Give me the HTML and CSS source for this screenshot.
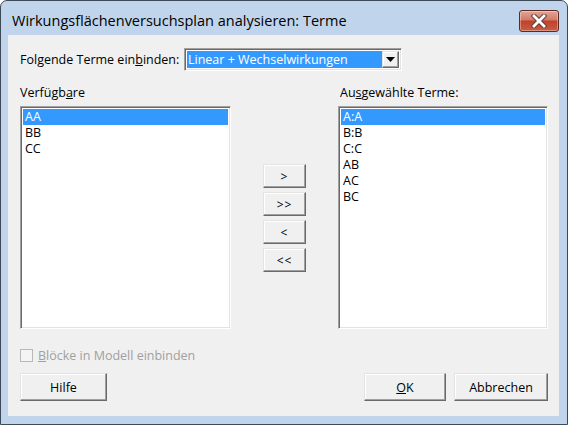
FILE: index.html
```html
<!DOCTYPE html>
<html lang="de">
<head>
<meta charset="utf-8">
<title>Wirkungsflächenversuchsplan analysieren: Terme</title>
<link rel="stylesheet" href="styles.css">
</head>
<body>
<div class="window">
  <div class="titlebar">
    <span class="title">Wirkungsflächenversuchsplan analysieren: Terme</span>
    <span class="close">
      <svg width="16" height="14" viewBox="0 0 16 14">
        <path d="M3 2 L13 12 M13 2 L3 12" stroke="#5a3a36" stroke-width="4.6" stroke-linecap="square"/>
        <path d="M3 2 L13 12 M13 2 L3 12" stroke="#ffffff" stroke-width="2.8" stroke-linecap="square"/>
      </svg>
    </span>
  </div>
  <div class="client">
    <div class="combo-row">
      <span class="label">Folgende Terme ein<u>b</u>inden:</span>
      <div class="combo">
        <span class="combo-value">Linear + Wechselwirkungen</span>
        <span class="combo-btn">
          <svg width="9" height="5" viewBox="0 0 9 5"><path d="M0 0 H9 L4.5 5 Z" fill="#000"/></svg>
        </span>
      </div>
    </div>
    <div class="lists">
      <div class="col">
        <div class="label list-label">Verfügb<u>a</u>re</div>
        <div class="listbox">
          <div class="item sel">AA</div>
          <div class="item">BB</div>
          <div class="item">CC</div>
        </div>
      </div>
      <div class="movers">
        <span class="btn mover">&gt;</span>
        <span class="btn mover">&gt;&gt;</span>
        <span class="btn mover">&lt;</span>
        <span class="btn mover">&lt;&lt;</span>
      </div>
      <div class="col">
        <div class="label list-label right-label">Au<u>s</u>gewählte Terme:</div>
        <div class="listbox">
          <div class="item sel">A:A</div>
          <div class="item">B:B</div>
          <div class="item">C:C</div>
          <div class="item">AB</div>
          <div class="item">AC</div>
          <div class="item">BC</div>
        </div>
      </div>
    </div>
    <div class="check-row">
      <span class="checkbox"></span>
      <span class="label disabled"><u>B</u>löcke in Modell einbinden</span>
    </div>
    <div class="footer">
      <span class="btn wide help">Hilfe</span>
      <div class="footer-right">
        <span class="btn wide ok"><u>O</u>K</span>
        <span class="btn wide cancel">Abbrechen</span>
      </div>
    </div>
  </div>
</div>
</body>
</html>
```

FILE: styles.css
```css
* { box-sizing: border-box; }
html, body { margin: 0; padding: 0; }
body {
  width: 568px;
  height: 425px;
  overflow: hidden;
  background: #ffffff;
}
.window {
  width: 568px;
  height: 425px;
  background: #c0d5ec;
  border: 1px solid #3d4a58;
  border-radius: 7px 7px 0 0;
  display: flex;
  flex-direction: column;
  padding: 0 8px 8px 7px;
}
.titlebar {
  height: 34px;
  display: flex;
  align-items: flex-start;
  justify-content: space-between;
  flex-shrink: 0;
}
.title {
  font-family: "Open Sans", "Noto Sans", sans-serif;
  font-size: 14.5px;
  color: #000;
  margin: 11px 0 0 4px;
  line-height: 18px;
}
.close {
  width: 40px;
  height: 22px;
  margin-top: 9px;
  margin-right: 0;
  border: 1px solid #5b2a24;
  border-radius: 3px;
  background: linear-gradient(#e2a597 0%, #d27a68 45%, #c0402b 50%, #c95d44 100%);
  box-shadow: inset 0 0 0 1px rgba(255,255,255,0.35);
  display: flex;
  align-items: center;
  justify-content: center;
}
.client {
  flex: 1;
  background: #f0f0f0;
  padding: 13px 10px 0 12px;
  font-family: "Open Sans", "Noto Sans", sans-serif;
  font-size: 12.5px;
  color: #000;
  display: flex;
  flex-direction: column;
}
.label { line-height: 15px; white-space: nowrap; }
.combo-row {
  display: flex;
  align-items: center;
  height: 23px;
}
.combo-row .label { width: 164px; }
.combo {
  width: 218px;
  height: 23px;
  display: flex;
  background: #fff;
  border: 1px solid;
  border-color: #a0a0a0 #ffffff #ffffff #a0a0a0;
  box-shadow: inset 1px 1px 0 #696969, inset -1px -1px 0 #e3e3e3;
  padding: 2px;
}
.combo-value {
  flex: 1;
  background: #3399ff;
  color: #fff;
  line-height: 17px;
  padding-left: 1px;
}
.combo-btn {
  width: 17px;
  background: #f0f0f0;
  border: 1px solid;
  border-color: #e3e3e3 #696969 #696969 #e3e3e3;
  box-shadow: inset -1px -1px 0 #a0a0a0, inset 1px 1px 0 #fff;
  display: flex;
  align-items: center;
  justify-content: center;
}
.lists {
  display: grid;
  grid-template-columns: 211px 43px 210px;
  column-gap: 0;
  justify-content: space-between;
  width: 528px;
  margin-top: 14px;
}
.list-label { height: 21px; padding-top: 0; }
.right-label { padding-left: 2px; }
.listbox {
  height: 223px;
  background: #fff;
  border: 1px solid;
  border-color: #a0a0a0 #ffffff #ffffff #a0a0a0;
  box-shadow: inset 1px 1px 0 #696969, inset -1px -1px 0 #e3e3e3;
  padding: 2px 2px 2px 2px;
}
.item {
  height: 16px;
  line-height: 16px;
  padding-left: 2px;
}
.item.sel { background: #3399ff; color: #fff; }
.movers {
  display: flex;
  flex-direction: column;
  gap: 4px;
  padding-top: 79px;
}
.btn {
  display: flex;
  align-items: center;
  justify-content: center;
  background: #f0f0f0;
  border: 1px solid;
  border-color: #e3e3e3 #696969 #696969 #e3e3e3;
  box-shadow: inset -1px -1px 0 #a0a0a0, inset 1px 1px 0 #fff;
}
.mover { width: 43px; height: 24px; font-size: 12px; letter-spacing: 1px; }
.check-row {
  display: flex;
  align-items: center;
  margin-top: 19px;
  height: 14px;
}
.checkbox {
  width: 13px;
  height: 13px;
  border: 1px solid #b8b8b8;
  background: #f4f4f4;
  margin-right: 5px;
}
.disabled { color: #a0a0a0; }
.footer {
  display: flex;
  justify-content: space-between;
  width: 528px;
  margin-top: 11px;
}
.footer-right { display: flex; gap: 8px; }
.wide { height: 28px; }
.help { width: 87px; }
.ok { width: 82px; }
.cancel { width: 94px; }
```
